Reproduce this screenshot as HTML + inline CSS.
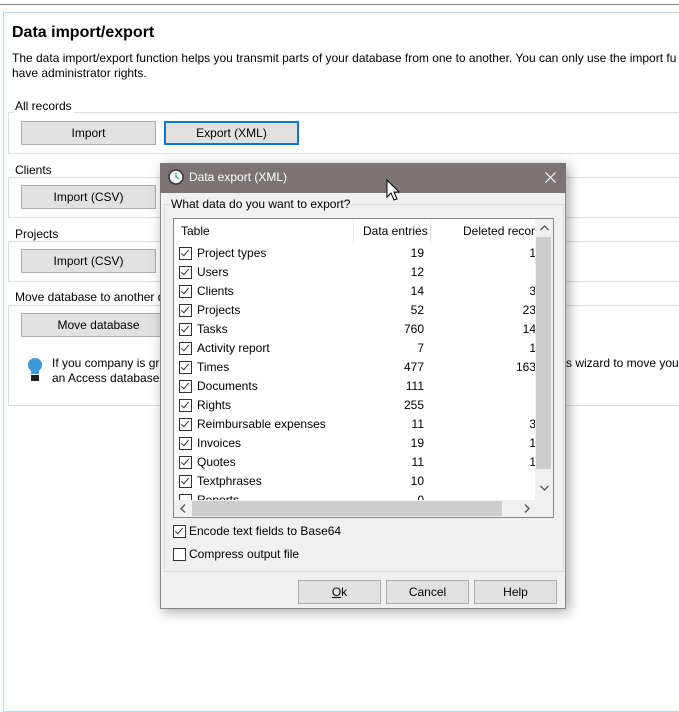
<!DOCTYPE html><html><head><style>
body{margin:0;width:679px;height:679px;background:#fff;font-family:"Liberation Sans",sans-serif;font-size:12px;color:#000;position:relative;overflow:hidden}
.a{position:absolute;white-space:nowrap}
.btn{position:absolute;background:#e1e1e1;border:1px solid #adadad;box-sizing:border-box;text-align:center;line-height:22px;font-size:12px}
.gb{position:absolute;border:1px solid #dcdcdc;box-sizing:border-box}
.gl{position:absolute;background:#fff;padding:0 1px;font-size:12px}
.cb{position:absolute;width:11px;height:11px;border:1px solid #333;background:#fff}
.cb.c::after{content:"";position:absolute;left:3px;top:0px;width:3px;height:7px;border:solid #333;border-width:0 1.3px 1.3px 0;transform:rotate(40deg)}
</style></head><body>
<div class="a" style="left:0;top:4px;width:679px;height:1px;background:#888"></div>
<div class="a" style="left:3px;top:12px;width:700px;height:700px;border:1px solid #b5dcf0;box-sizing:border-box"></div>
<div class="a" style="left:12px;top:24px;font-size:16px;font-weight:bold">Data import/export</div>
<div class="a" style="left:12px;top:51px">The data import/export function helps you transmit parts of your database from one to another. You can only use the import fu</div>
<div class="a" style="left:12px;top:66px">have administrator rights.</div>
<div class="gb" style="left:8px;top:112px;width:690px;height:42px"></div><div class="gl" style="left:14px;top:99px">All records</div>
<div class="btn" style="left:21px;top:121px;width:135px;height:24px">Import</div>
<div class="btn" style="left:164px;top:121px;width:135px;height:24px;border:2px solid #0078d7;line-height:20px">Export (XML)</div>
<div class="gb" style="left:8px;top:177px;width:690px;height:41px"></div><div class="gl" style="left:14px;top:163px">Clients</div>
<div class="btn" style="left:21px;top:185px;width:135px;height:24px">Import (CSV)</div>
<div class="gb" style="left:8px;top:241px;width:690px;height:41px"></div><div class="gl" style="left:14px;top:227px">Projects</div>
<div class="btn" style="left:21px;top:249px;width:135px;height:24px">Import (CSV)</div>
<div class="gb" style="left:8px;top:305px;width:690px;height:101px"></div><div class="gl" style="left:14px;top:290px">Move database to another d</div>
<div class="btn" style="left:21px;top:313px;width:145px;height:24px;padding-left:10px">Move database</div>
<svg class="a" style="left:27px;top:357px" width="16" height="26"><circle cx="8" cy="8" r="7" fill="#3d9ad9"/><rect x="4" y="12" width="8" height="5" fill="#3d9ad9"/><rect x="4" y="18" width="8" height="6" fill="#222"/></svg>
<div class="a" style="left:52px;top:356px">If you company is gr</div>
<div class="a" style="left:52px;top:371px">an Access database t</div>
<div class="a" style="left:566px;top:356px;background:#fff;width:120px">s wizard to move your</div>
<!-- dialog -->
<div class="a" style="left:160px;top:163px;width:406px;height:446px;background:#f0f0f0;border:1px solid #888;box-sizing:border-box;box-shadow:3px 3px 12px rgba(0,0,0,.35)"></div>
<div class="a" style="left:160px;top:163px;width:406px;height:30px;background:#7a7574"></div>
<svg class="a" style="left:168px;top:169px" width="16" height="16"><circle cx="8" cy="8" r="7" fill="#fff" stroke="#333" stroke-width="1.5"/><path d="M8 4V8L11 10" stroke="#3a8" stroke-width="1.3" fill="none"/></svg>
<div class="a" style="left:189px;top:170px;color:#fff;font-size:12px">Data export (XML)</div>
<svg class="a" style="left:545px;top:172px" width="11" height="11"><path d="M0.5 0.5L10.5 10.5M10.5 0.5L0.5 10.5" stroke="#fff" stroke-width="1.2"/></svg>
<div class="gb" style="left:164px;top:204px;width:400px;height:368px;border-color:#dcdcdc"></div>
<div class="gl" style="left:170px;top:197px;background:#f0f0f0">What data do you want to export?</div>
<div class="a" style="left:173px;top:218px;width:381px;height:300px;background:#fff;border:1px solid #828790;box-sizing:border-box;overflow:hidden">
 <div class="a" style="left:7px;top:5px">Table</div>
 <div class="a" style="left:179px;top:2px;width:1px;height:22px;background:#e5e5e5"></div>
 <div class="a" style="left:189px;top:5px">Data entries</div>
 <div class="a" style="left:256px;top:2px;width:1px;height:22px;background:#e5e5e5"></div>
 <div class="a" style="left:289px;top:5px">Deleted recor</div>
 <div id="rows"></div>
 <div class="a" style="left:361px;top:0;width:18px;height:282px;background:#f0f0f0"></div>
 <div class="a" style="left:362px;top:18px;width:15px;height:232px;background:#cdcdcd"></div>
 <svg class="a" style="left:366px;top:6px" width="9" height="6"><path d="M0.5 5L4.5 1L8.5 5" stroke="#555" fill="none" stroke-width="1.3"/></svg>
 <svg class="a" style="left:366px;top:266px" width="9" height="6"><path d="M0.5 1L4.5 5L8.5 1" stroke="#555" fill="none" stroke-width="1.3"/></svg>
 <div class="a" style="left:0;top:281px;width:379px;height:17px;background:#f0f0f0"></div>
 <div class="a" style="left:18px;top:282px;width:310px;height:15px;background:#cdcdcd"></div>
 <svg class="a" style="left:6px;top:285px" width="6" height="9"><path d="M5 0.5L1 4.5L5 8.5" stroke="#555" fill="none" stroke-width="1.3"/></svg>
 <svg class="a" style="left:350px;top:285px" width="6" height="9"><path d="M1 0.5L5 4.5L1 8.5" stroke="#555" fill="none" stroke-width="1.3"/></svg>
</div>
<div class="cb c" style="left:173px;top:525px"></div><div class="a" style="left:189px;top:524px">Encode text fields to Base64</div>
<div class="cb" style="left:173px;top:548px"></div><div class="a" style="left:189px;top:547px">Compress output file</div>
<div class="btn" style="left:298px;top:580px;width:83px;height:24px"><u>O</u>k</div>
<div class="btn" style="left:386px;top:580px;width:83px;height:24px">Cancel</div>
<div class="btn" style="left:474px;top:580px;width:83px;height:24px">Help</div>
<svg class="a" style="left:386px;top:179px" width="16" height="24"><path d="M1 1V18L5 14L8 21L11 20L8 13H13Z" fill="#fff" stroke="#000"/></svg>
<script>
var d=[["Project types",19,"1"],["Users",12,""],["Clients",14,"3"],["Projects",52,"23"],["Tasks",760,"14"],["Activity report",7,"1"],["Times",477,"163"],["Documents",111,""],["Rights",255,""],["Reimbursable expenses",11,"3"],["Invoices",19,"1"],["Quotes",11,"1"],["Textphrases",10,""],["Reports",0,""]];
var h="";d.forEach(function(r,i){var y=25+i*19;h+='<div class="cb'+(i<13?' c':'')+'" style="left:5px;top:'+(y+3)+'px"></div><div class="a" style="left:23px;top:'+(y+2)+'px">'+r[0]+'</div><div class="a" style="left:200px;width:50px;text-align:right;top:'+(y+2)+'px">'+r[1]+'</div><div class="a" style="left:300px;width:62px;text-align:right;top:'+(y+2)+'px">'+r[2]+'</div>';});
document.getElementById("rows").innerHTML=h;
</script>
</body></html>
